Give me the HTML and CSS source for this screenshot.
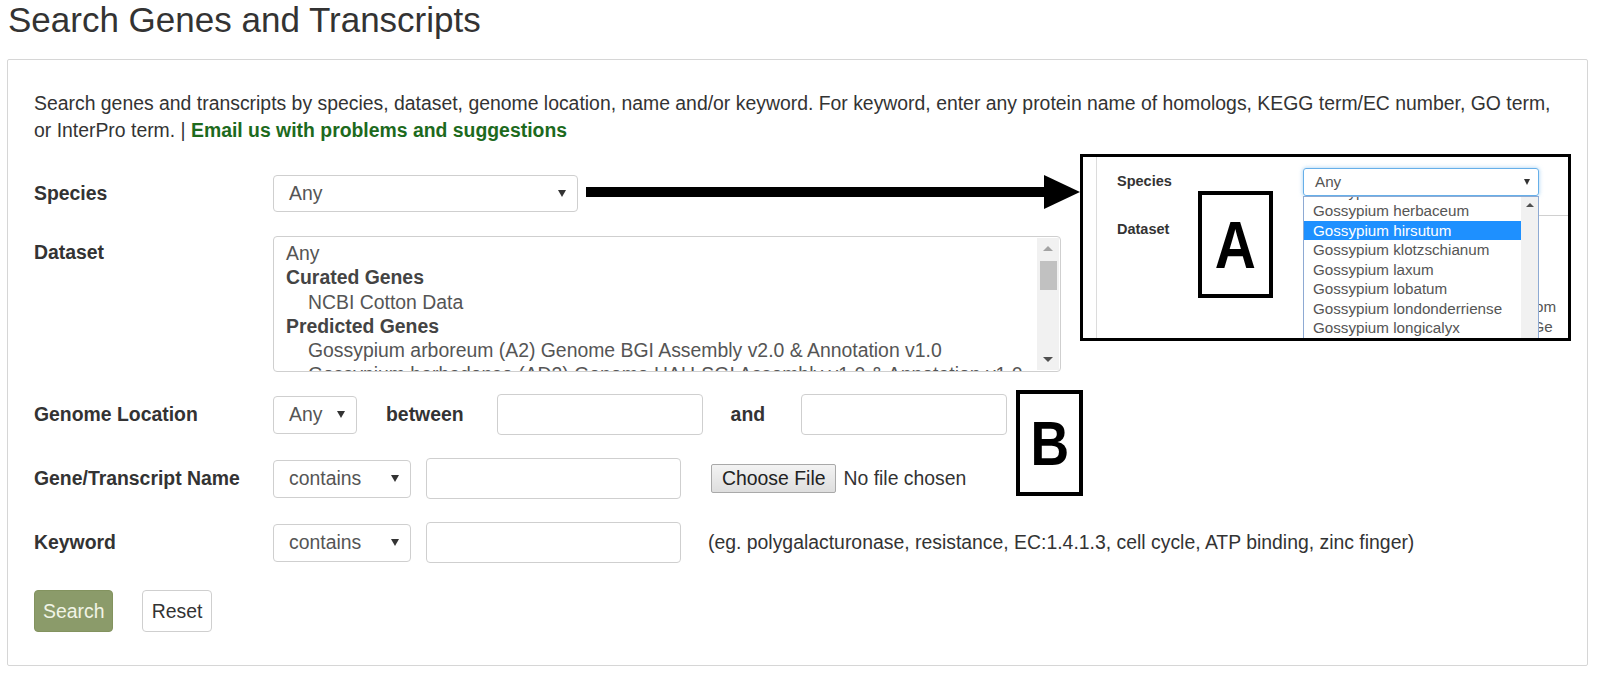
FILE: index.html
```html
<!DOCTYPE html>
<html>
<head>
<meta charset="utf-8">
<title>Search Genes and Transcripts</title>
<link rel="stylesheet" href="styles.css">
</head>
<body>
<h1 class="title">Search Genes and Transcripts</h1>
<div class="panel">
  <p class="intro">Search genes and transcripts by species, dataset, genome location, name and/or keyword. For keyword, enter any protein name of homologs, KEGG term/EC number, GO term,<br>or InterPro term. | <a class="mail" href="#">Email us with problems and suggestions</a></p>

  <div class="frow r-species">
    <span class="lbl">Species</span>
    <div class="sel w-species"><span>Any</span><span class="caret"></span></div>
  </div>

  <div class="frow r-dataset">
    <span class="lbl lbl-top">Dataset</span>
    <div class="listbox">
      <div class="opts">
        <div class="opt">Any</div>
        <div class="opt grp">Curated Genes</div>
        <div class="opt ind">NCBI Cotton Data</div>
        <div class="opt grp">Predicted Genes</div>
        <div class="opt ind">Gossypium arboreum (A2) Genome BGI Assembly v2.0 &amp; Annotation v1.0</div>
        <div class="opt ind">Gossypium barbadense (AD2) Genome HAU-SGI Assembly v1.0 &amp; Annotation v1.0</div>
      </div>
      <div class="vscroll">
        <span class="sc-up"></span>
        <span class="sc-thumb"></span>
        <span class="sc-fill"></span>
        <span class="sc-down"></span>
      </div>
    </div>
  </div>

  <div class="frow r-std">
    <span class="lbl">Genome Location</span>
    <div class="sel w-any"><span>Any</span><span class="caret"></span></div>
    <span class="word w-between">between</span>
    <input class="txt w-loc" type="text">
    <span class="word w-and">and</span>
    <input class="txt w-loc" type="text">
  </div>

  <div class="frow r-std">
    <span class="lbl">Gene/Transcript Name</span>
    <div class="sel w-contains"><span>contains</span><span class="caret"></span></div>
    <input class="txt w-name" type="text">
    <span class="filebtn">Choose File</span>
    <span class="nofile">No file chosen</span>
  </div>

  <div class="frow r-std">
    <span class="lbl">Keyword</span>
    <div class="sel w-contains"><span>contains</span><span class="caret"></span></div>
    <input class="txt w-name" type="text">
    <span class="hint">(eg. polygalacturonase, resistance, EC:1.4.1.3, cell cycle, ATP binding, zinc finger)</span>
  </div>

  <div class="btnrow">
    <button class="btn btn-search" type="button">Search</button>
    <button class="btn btn-reset" type="button">Reset</button>
  </div>

  <svg class="arrow" width="494" height="36" viewBox="0 0 494 36">
    <rect x="0" y="13" width="462" height="10" fill="#000"/>
    <polygon points="458,1 494,18 458,35" fill="#000"/>
  </svg>

  <div class="inset">
    <div class="mini-panel">
      <div class="mini-row">
        <span class="mini-lbl">Species</span>
        <div class="mini-sel"><span>Any</span><span class="caret mini-caret"></span></div>
      </div>
      <div class="mini-row mini-row2">
        <span class="mini-lbl mini-lbl-top">Dataset</span>
        <div class="mini-list">
          <div>Any</div>
          <div class="grp">Curated Genes</div>
          <div class="ind">NCBI Cotton Data</div>
          <div class="grp">Predicted Genes</div>
          <div class="ind">Gossypium arboreum (A2) Genom</div>
          <div class="ind">Gossypium barbadense (AD2) Ge</div>
        </div>
      </div>
    </div>
    <div class="dropdown">
      <div class="dd-items">
        <div class="dd-item">Gossypium harknessii</div>
        <div class="dd-item">Gossypium herbaceum</div>
        <div class="dd-item dd-on">Gossypium hirsutum</div>
        <div class="dd-item">Gossypium klotzschianum</div>
        <div class="dd-item">Gossypium laxum</div>
        <div class="dd-item">Gossypium lobatum</div>
        <div class="dd-item">Gossypium londonderriense</div>
        <div class="dd-item">Gossypium longicalyx</div>
        <div class="dd-item">Gossypium lobatum</div>
      </div>
      <div class="dd-scroll"><span class="sc-up"></span></div>
    </div>
    <div class="tag tag-a"><span class="tag-letter">A</span></div>
  </div>

  <div class="tag tag-b"><span class="tag-letter">B</span></div>
</div>
</body>
</html>
```

FILE: styles.css
```css
* { box-sizing: border-box; }

body {
  margin: 0;
  font-family: "Liberation Sans", Arial, sans-serif;
  font-size: 19.4px;
  line-height: 27px;
  color: #333;
  background: #fff;
}

.title {
  margin: 0 0 19px 8px;
  font-size: 35px;
  line-height: 40px;
  font-weight: normal;
  color: #333;
}

.panel {
  position: relative;
  margin-left: 7px;
  width: 1581px;
  border: 1px solid #d6d6d6;
  border-radius: 2px;
  padding: 30px 26px 33px 26px;
}

.intro { margin: 0 0 31px 0; }

.mail {
  color: #1d6a1d;
  font-weight: bold;
  text-decoration: none;
}

.frow { display: flex; align-items: center; }

.lbl {
  flex: none;
  width: 239px;
  font-weight: bold;
  color: #333;
}

.lbl-top { padding-top: 3px; }

.r-species { height: 37px; margin-bottom: 24px; }
.r-dataset { align-items: flex-start; margin-bottom: 22px; }
.r-std { height: 41px; margin-bottom: 23px; }

.sel {
  flex: none;
  height: 38px;
  display: flex;
  align-items: center;
  justify-content: space-between;
  padding: 0 11px 0 15px;
  border: 1px solid #cfcfcf;
  border-radius: 4px;
  color: #555;
  background: #fff;
}

.r-species .sel { height: 37px; }

.caret {
  width: 0;
  height: 0;
  border-left: 4px solid transparent;
  border-right: 4px solid transparent;
  border-top: 7px solid #333;
}

.w-species { width: 305px; }
.w-any { width: 84px; }
.w-contains { width: 138px; }

.txt {
  flex: none;
  height: 41px;
  border: 1px solid #cfcfcf;
  border-radius: 4px;
  background: #fff;
  font: inherit;
  padding: 0 12px;
}

.w-loc { width: 206px; }
.w-name { width: 255px; margin-left: 15px; }

.word { font-weight: bold; }
.w-between { margin-left: 29px; margin-right: 33px; }
.w-and { margin-left: 28px; margin-right: 36px; }

.filebtn {
  margin-left: 30px;
  height: 29px;
  line-height: 27px;
  padding: 0 10px;
  border: 1px solid #a9a9a9;
  border-radius: 2px;
  background: linear-gradient(#f3f3f3, #dedede);
  color: #222;
}

.nofile { margin-left: 7px; color: #333; }

.hint { margin-left: 27px; color: #333; }

/* dataset listbox */
.listbox {
  flex: none;
  width: 788px;
  height: 136px;
  border: 1px solid #cfcfcf;
  border-radius: 4px;
  display: flex;
  overflow: hidden;
  background: #fff;
}

.opts {
  flex: 1;
  padding: 4px 0 0 12px;
  overflow: hidden;
  color: #555;
  white-space: nowrap;
}

.opt { line-height: 24.3px; height: 24.3px; }
.opt.grp { font-weight: bold; color: #444; }
.opt.ind { padding-left: 22px; }

.vscroll {
  flex: none;
  width: 22px;
  margin: 1px 1px 1px 0;
  background: #f1f1f1;
  display: flex;
  flex-direction: column;
  align-items: center;
}

.sc-up {
  margin-top: 8px;
  width: 0;
  height: 0;
  border-left: 5px solid transparent;
  border-right: 5px solid transparent;
  border-bottom: 5px solid #a3a3a3;
}

.sc-thumb {
  margin-top: 10px;
  width: 17px;
  height: 29px;
  background: #c1c1c1;
}

.sc-fill { flex: 1; }

.sc-down {
  margin-bottom: 8px;
  width: 0;
  height: 0;
  border-left: 5px solid transparent;
  border-right: 5px solid transparent;
  border-top: 5px solid #505050;
}

/* buttons */
.btnrow { display: flex; margin-top: 27px; }

.btn {
  height: 42px;
  font: inherit;
  border-radius: 4px;
  padding: 0 8px;
  cursor: pointer;
}

.btn-search {
  width: 79px;
  background: #8b9b6a;
  border: 1px solid #83935f;
  color: #f1f4e6;
}

.btn-reset {
  width: 70px;
  margin-left: 29px;
  background: #fff;
  border: 1px solid #cfcfcf;
  color: #333;
}

/* annotation overlays */
.arrow {
  position: absolute;
  left: 578px;
  top: 114px;
}

.inset {
  position: absolute;
  left: 1072px;
  top: 94px;
  width: 491px;
  height: 187px;
  border: 3px solid #000;
  background: #fff;
  overflow: hidden;
  font-size: 15.2px;
  line-height: 19.5px;
}

.mini-panel {
  margin-left: 13px;
  height: 100%;
  border-left: 1px solid #dcdcdc;
  padding: 11px 0 0 20px;
}

.mini-row { display: flex; align-items: center; }
.mini-row2 { align-items: flex-start; margin-top: 19px; }

.mini-lbl {
  flex: none;
  width: 186px;
  font-weight: bold;
  font-size: 14.5px;
  color: #333;
}

.mini-lbl-top { padding-top: 5px; }

.mini-sel {
  flex: none;
  width: 236px;
  height: 28px;
  display: flex;
  align-items: center;
  justify-content: space-between;
  padding: 0 8px 0 11px;
  border: 1px solid #66afe9;
  border-radius: 3px;
  box-shadow: 0 0 4px rgba(102, 175, 233, 0.6);
  color: #555;
}

.mini-caret {
  border-left-width: 3px;
  border-right-width: 3px;
  border-top-width: 6px;
}

.mini-list {
  flex: none;
  width: 420px;
  height: 200px;
  border: 1px solid #d0d0d0;
  border-radius: 3px;
  padding: 3px 10px;
  color: #555;
  white-space: nowrap;
}

.mini-list .grp { font-weight: bold; }
.mini-list .ind { padding-left: 10px; }

.dropdown {
  position: absolute;
  left: 220px;
  top: 39px;
  width: 236px;
  height: 160px;
  border: 1px solid #8eaad3;
  background: #fff;
  display: flex;
  overflow: hidden;
}

.dd-items { flex: 1; margin-top: -15.5px; }

.dd-item {
  height: 19.5px;
  line-height: 19.5px;
  padding-left: 9px;
  color: #555;
  white-space: nowrap;
}

.dd-on { background: #1e90ff; color: #fff; }

.dd-scroll {
  flex: none;
  width: 17px;
  background: #f1f1f1;
  display: flex;
  justify-content: center;
}

.dd-scroll .sc-up {
  margin-top: 6px;
  border-left-width: 4px;
  border-right-width: 4px;
  border-bottom-width: 4px;
  border-bottom-color: #505050;
}

.tag {
  position: absolute;
  border: 4px solid #000;
  background: #fff;
  display: flex;
  align-items: center;
  justify-content: center;
  font-family: "Liberation Sans", Arial, sans-serif;
  font-weight: bold;
  color: #000;
}

.tag-letter {
  display: inline-block;
  transform: scaleX(0.85);
}

.tag-a {
  left: 115px;
  top: 34px;
  width: 75px;
  height: 107px;
  font-size: 67px;
  line-height: 67px;
}

.tag-b {
  left: 1008px;
  top: 330px;
  width: 67px;
  height: 106px;
  font-size: 63px;
  line-height: 63px;
}
```
